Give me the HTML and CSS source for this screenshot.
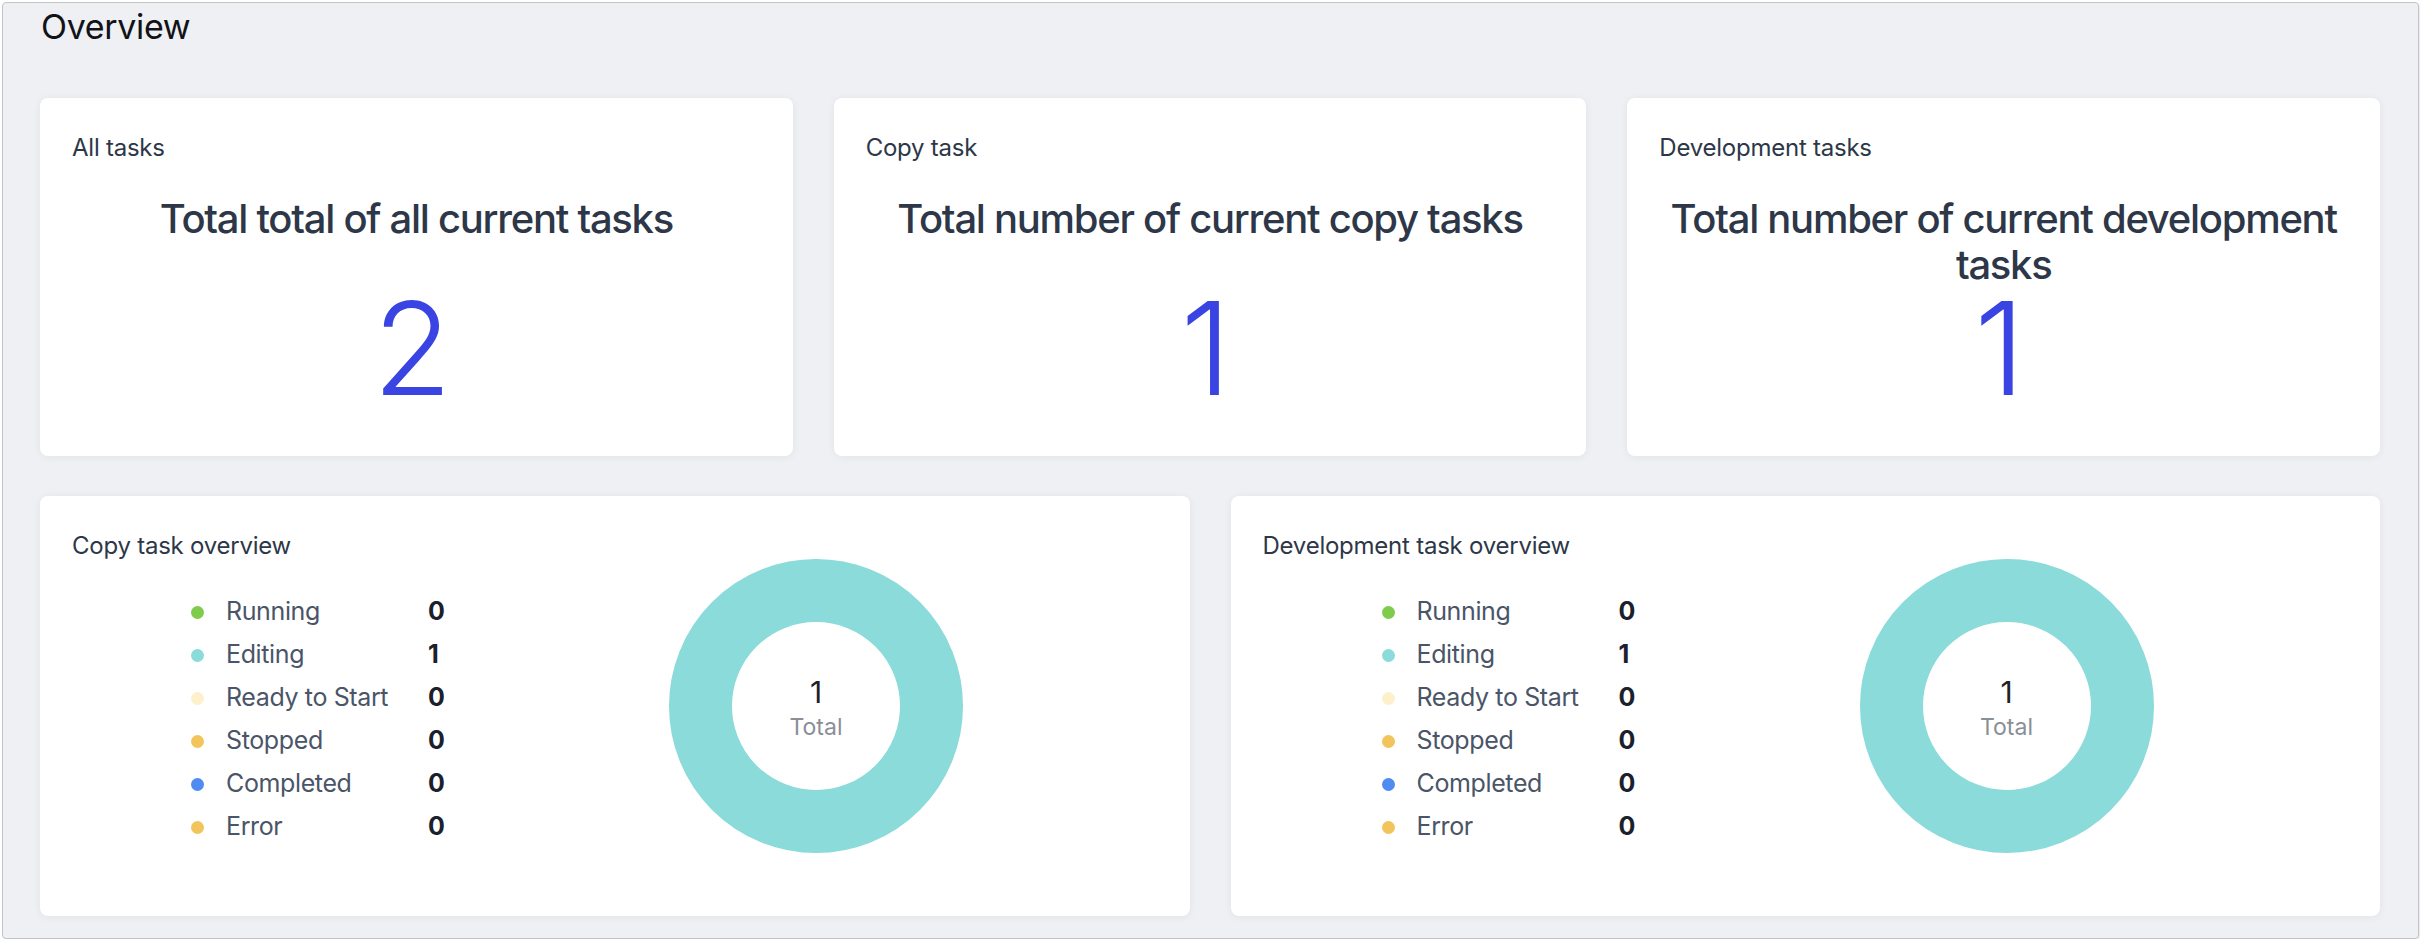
FILE: index.html
```html
<!DOCTYPE html>
<html lang="en">
<head>
<meta charset="utf-8">
<title>Overview</title>
<link rel="stylesheet" href="styles.css">
</head>
<body>
<div class="frame">
  <h1 class="page-title">Overview</h1>

  <section class="stats">
    <div class="card stat-card">
      <div class="card-label">All tasks</div>
      <div class="stat-title">Total total of all current tasks</div>
      <div class="stat-value">2</div>
    </div>
    <div class="card stat-card">
      <div class="card-label">Copy task</div>
      <div class="stat-title">Total number of current copy tasks</div>
      <div class="stat-value">1</div>
    </div>
    <div class="card stat-card">
      <div class="card-label">Development tasks</div>
      <div class="stat-title">Total number of current development tasks</div>
      <div class="stat-value">1</div>
    </div>
  </section>

  <section class="overviews">
    <div class="card overview-card">
      <div class="card-label">Copy task overview</div>
      <ul class="legend">
        <li class="legend-row"><span class="dot dot-running"></span><span class="legend-name">Running</span><span class="legend-count">0</span></li>
        <li class="legend-row"><span class="dot dot-editing"></span><span class="legend-name">Editing</span><span class="legend-count">1</span></li>
        <li class="legend-row"><span class="dot dot-ready"></span><span class="legend-name">Ready to Start</span><span class="legend-count">0</span></li>
        <li class="legend-row"><span class="dot dot-stopped"></span><span class="legend-name">Stopped</span><span class="legend-count">0</span></li>
        <li class="legend-row"><span class="dot dot-completed"></span><span class="legend-name">Completed</span><span class="legend-count">0</span></li>
        <li class="legend-row"><span class="dot dot-error"></span><span class="legend-name">Error</span><span class="legend-count">0</span></li>
      </ul>
      <div class="donut">
        <div class="donut-text">
          <div class="donut-num">1</div>
          <div class="donut-label">Total</div>
        </div>
      </div>
    </div>

    <div class="card overview-card">
      <div class="card-label">Development task overview</div>
      <ul class="legend">
        <li class="legend-row"><span class="dot dot-running"></span><span class="legend-name">Running</span><span class="legend-count">0</span></li>
        <li class="legend-row"><span class="dot dot-editing"></span><span class="legend-name">Editing</span><span class="legend-count">1</span></li>
        <li class="legend-row"><span class="dot dot-ready"></span><span class="legend-name">Ready to Start</span><span class="legend-count">0</span></li>
        <li class="legend-row"><span class="dot dot-stopped"></span><span class="legend-name">Stopped</span><span class="legend-count">0</span></li>
        <li class="legend-row"><span class="dot dot-completed"></span><span class="legend-name">Completed</span><span class="legend-count">0</span></li>
        <li class="legend-row"><span class="dot dot-error"></span><span class="legend-name">Error</span><span class="legend-count">0</span></li>
      </ul>
      <div class="donut">
        <div class="donut-text">
          <div class="donut-num">1</div>
          <div class="donut-label">Total</div>
        </div>
      </div>
    </div>
  </section>
</div>
</body>
</html>
```

FILE: styles.css
```css
* {
  box-sizing: border-box;
}

html, body {
  margin: 0;
  padding: 0;
  background: #ffffff;
}

body {
  font-family: Inter, "Liberation Sans", sans-serif;
  color: #2d3748;
}

.frame {
  margin: 2px 0 0 2px;
  width: 2417px;
  height: 937px;
  border: 1px solid #c4c4c6;
  border-radius: 4px;
  background: #eff0f3;
  padding: 4px 38px 0 37px;
  box-shadow: 1px 1px 1px rgba(0, 0, 0, 0.08);
}

.page-title {
  margin: 0;
  font-size: 34px;
  line-height: 40px;
  font-weight: 400;
  letter-spacing: -0.01em;
  color: #111318;
  padding-left: 1px;
}

.stats {
  margin-top: 51px;
  display: grid;
  grid-template-columns: repeat(3, 1fr);
  column-gap: 41px;
}

.card {
  background: #ffffff;
  border-radius: 8px;
  box-shadow: 0 1px 8px rgba(20, 30, 60, 0.06);
  padding: 32px;
}

.card-label {
  font-size: 24px;
  line-height: 36px;
  color: #2d3748;
  letter-spacing: -0.01em;
}

.stat-card {
  height: 358px;
}

.stat-title {
  margin-top: 30px;
  height: 92px;
  font-size: 40px;
  line-height: 46px;
  font-weight: 500;
  letter-spacing: -0.032em;
  text-align: center;
  color: #2d3748;
}

.stat-value {
  margin-top: 10px;
  font-size: 129px;
  line-height: 100px;
  font-weight: 300;
  text-align: center;
  color: #3944e2;
  margin-left: -8px;
}

.overviews {
  margin-top: 40px;
  display: grid;
  grid-template-columns: 1fr 1fr;
  column-gap: 41px;
}

.overview-card {
  height: 420px;
  display: grid;
  grid-template-columns: 597px 294px 1fr;
  grid-template-rows: 36px 1fr;
}

.overview-card .card-label {
  grid-column: 1;
  grid-row: 1;
}

.legend {
  grid-column: 1;
  grid-row: 2;
  list-style: none;
  margin: 25px 0 0 0;
  padding: 0 0 0 119px;
}

.legend-row {
  display: flex;
  align-items: center;
  height: 43px;
  font-size: 25px;
  letter-spacing: -0.015em;
}

.dot {
  width: 13px;
  height: 13px;
  border-radius: 50%;
  margin-right: 22px;
  margin-top: 4px;
  flex: none;
}

.dot-running { background: #7fcb4c; }
.dot-editing { background: #8adbd9; }
.dot-ready { background: #fdf0ca; }
.dot-stopped { background: #f2c45c; }
.dot-completed { background: #4f8bf0; }
.dot-error { background: #f2c45c; }

.legend-name {
  width: 202px;
  color: #4a5568;
}

.legend-count {
  font-weight: 700;
  color: #1a202c;
}

.donut {
  grid-column: 2;
  grid-row: 1 / span 2;
  align-self: center;
  width: 294px;
  height: 294px;
  border-radius: 50%;
  border: 63px solid #8adbd9;
  display: flex;
  align-items: center;
  justify-content: center;
}

.donut-text {
  margin-top: 8px;
  text-align: center;
}

.donut-num {
  font-size: 30px;
  line-height: 34px;
  color: #1f2126;
}

.donut-label {
  font-size: 23px;
  line-height: 36px;
  color: #8a8e96;
}
```
